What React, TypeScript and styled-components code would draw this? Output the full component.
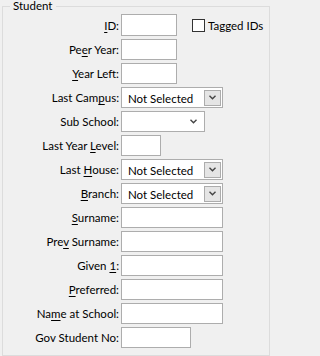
import React from "react";
import styled, { createGlobalStyle } from "styled-components";

const GlobalStyle = createGlobalStyle`
  html, body {
    margin: 0;
    padding: 0;
    background: #f0f0f0;
  }
  body {
    font-family: "Segoe UI", Lato, "Noto Sans", sans-serif;
    font-size: 11.5px;
    color: #000;
  }
`

const Page = styled.div`
  padding: 0 0 0 2px;
`

const GroupBox = styled.fieldset`
  box-sizing: border-box;
  width: 268px;
  margin: 0;
  padding: 2px 0 7px 0;
  border: 1px solid #dcdcdc;
  display: grid;
  grid-template-columns: 116px 1fr;
  column-gap: 2px;
  row-gap: 3px;
  align-items: center;
`

const Legend = styled.legend`
  margin-left: 7px;
  padding: 0 3px;
  font-size: 11.5px;
  line-height: 12px;
`

const Label = styled.label`
  text-align: right;
  white-space: nowrap;
  line-height: 14px;
  padding-top: 1px;

  u {
    text-decoration-thickness: 1px;
    text-underline-offset: 2px;
  }
`

const Field = styled.div<{ $tall?: boolean }>`
  display: flex;
  align-items: center;
  height: ${(p) => (p.$tall ? 22 : 21)}px;
`

const TextBox = styled.div<{ $w: number }>`
  box-sizing: border-box;
  width: ${(p) => p.$w}px;
  height: 100%;
  background: #fff;
  border: 1px solid #adadad;
`

const Combo = styled.div<{ $w: number }>`
  box-sizing: border-box;
  width: ${(p) => p.$w}px;
  height: 100%;
  background: #fff;
  border: 1px solid #adadad;
  display: flex;
  align-items: center;
  justify-content: space-between;
  padding: 1px 0 0 6px;
  white-space: nowrap;
`

const DropButton = styled.div`
  box-sizing: border-box;
  width: 17px;
  height: 16px;
  margin: -1px 1px 0 0;
  background: #e5e5e5;
  border: 1px solid #acacac;
  display: flex;
  align-items: center;
  justify-content: center;
`

const PlainArrow = styled.div`
  width: 17px;
  height: 16px;
  margin: -1px 2px 0 0;
  display: flex;
  align-items: center;
  justify-content: center;
`

const Check = styled.span`
  box-sizing: border-box;
  width: 13px;
  height: 13px;
  margin-left: 15px;
  background: #fff;
  border: 1px solid #333;
`

const CheckLabel = styled.span`
  margin-left: 3px;
  padding-top: 1px;
  white-space: nowrap;
`

const Chevron = () => (
  <svg width="7" height="5" viewBox="0 0 7 5">
    <path d="M0.5 0.8 L3.5 3.8 L6.5 0.8" fill="none" stroke="#444" strokeWidth="1.4" />
  </svg>
)

type Row = {
  label: React.ReactNode;
  kind: "text" | "combo" | "combo-plain";
  w: number;
  value?: string;
};

const rows: Row[] = [
  { label: <>Pe<u>e</u>r Year:</>, kind: "text", w: 56 },
  { label: <><u>Y</u>ear Left:</>, kind: "text", w: 56 },
  { label: <>Last Cam<u>p</u>us:</>, kind: "combo", w: 102, value: "Not Selected" },
  { label: <>Sub School:</>, kind: "combo-plain", w: 84 },
  { label: <>Last Year <u>L</u>evel:</>, kind: "text", w: 40 },
  { label: <>Last <u>H</u>ouse:</>, kind: "combo", w: 102, value: "Not Selected" },
  { label: <><u>B</u>ranch:</>, kind: "combo", w: 102, value: "Not Selected" },
  { label: <><u>S</u>urname:</>, kind: "text", w: 102 },
  { label: <>Pre<u>v</u> Surname:</>, kind: "text", w: 102 },
  { label: <>Given <u>1</u>:</>, kind: "text", w: 102 },
  { label: <><u>P</u>referred:</>, kind: "text", w: 102 },
  { label: <>Na<u>m</u>e at School:</>, kind: "text", w: 102 },
  { label: <>Gov Student No:</>, kind: "text", w: 70 },
];

export default function App() {
  return (
    <Page>
      <GlobalStyle />
      <GroupBox>
        <Legend>Student</Legend>
        <Label><u>I</u>D:</Label>
        <Field $tall>
          <TextBox $w={56} />
          <Check />
          <CheckLabel>Tagged IDs</CheckLabel>
        </Field>
        {rows.map((r, i) => (
          <React.Fragment key={i}>
            <Label>{r.label}</Label>
            <Field>
              {r.kind === "text" && <TextBox $w={r.w} />}
              {r.kind === "combo" && (
                <Combo $w={r.w}>
                  {r.value}
                  <DropButton><Chevron /></DropButton>
                </Combo>
              )}
              {r.kind === "combo-plain" && (
                <Combo $w={r.w}>
                  <span />
                  <PlainArrow><Chevron /></PlainArrow>
                </Combo>
              )}
            </Field>
          </React.Fragment>
        ))}
      </GroupBox>
    </Page>
  );
}
